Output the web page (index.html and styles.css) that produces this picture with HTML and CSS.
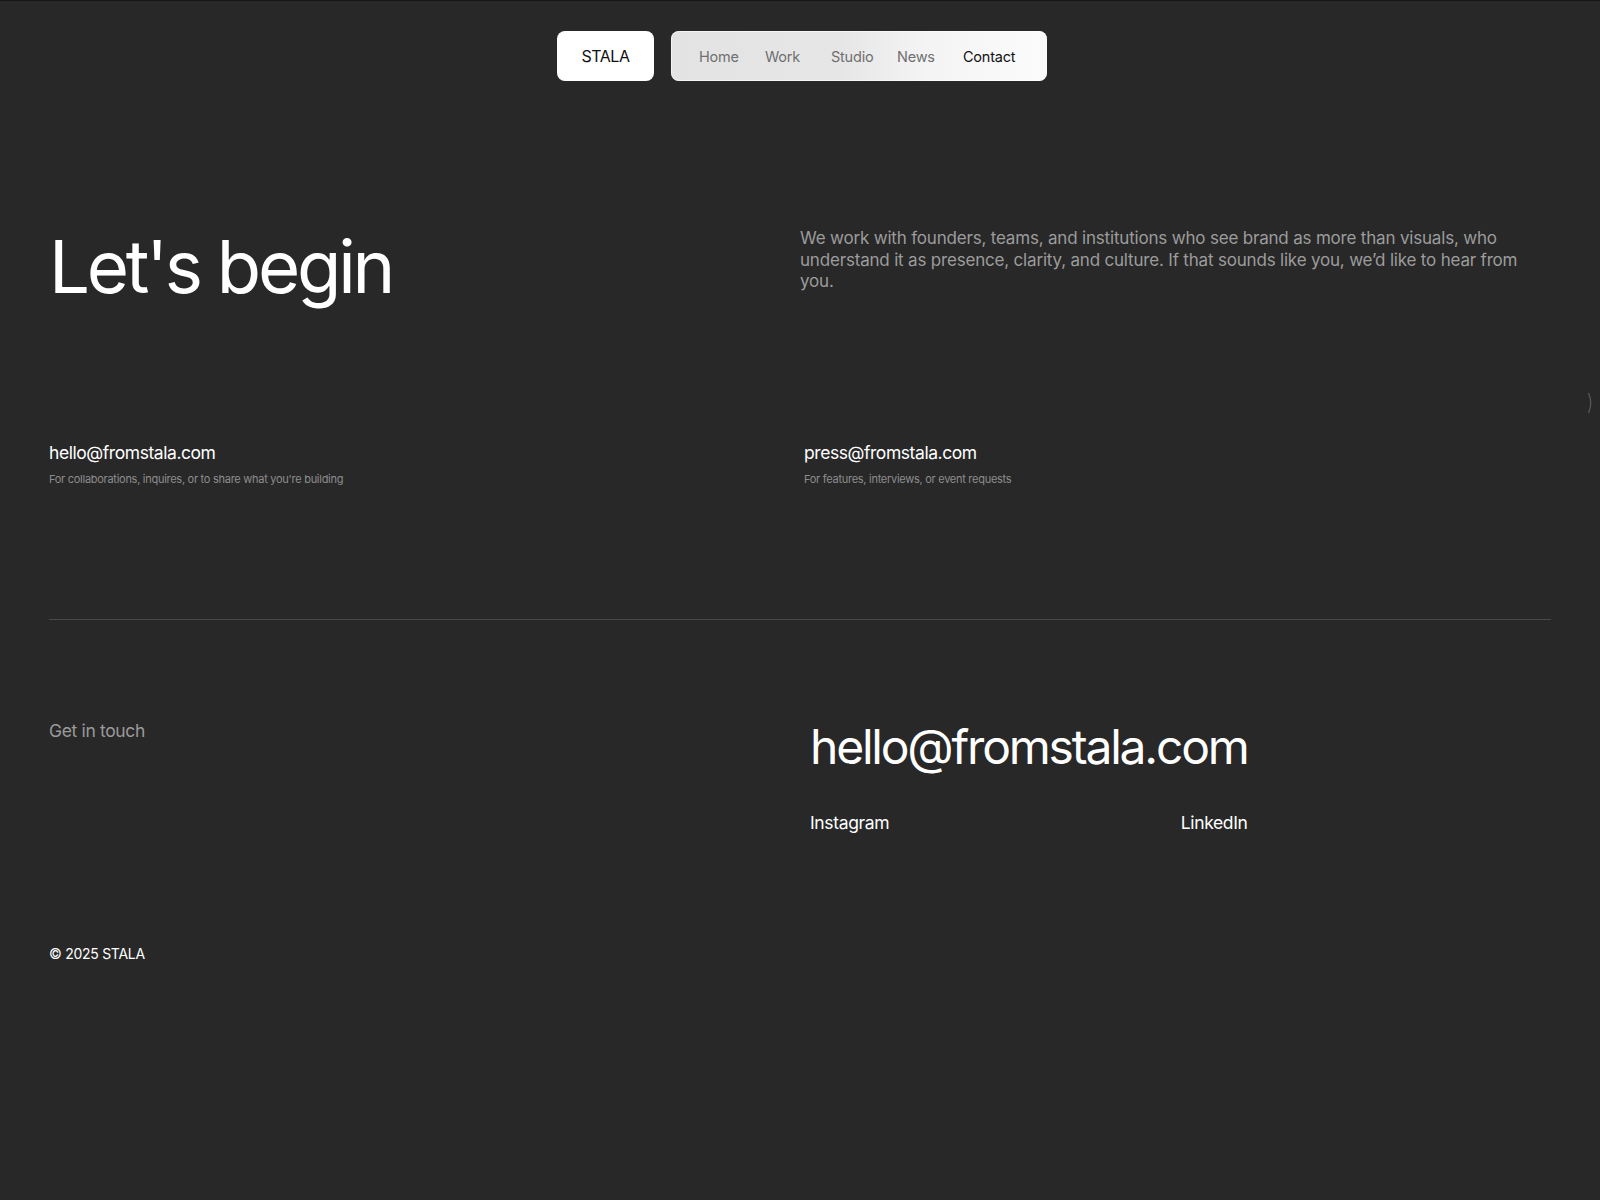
FILE: index.html
```html
<!DOCTYPE html>
<html lang="en">

<head>
    <meta charset="UTF-8">
    <meta name="viewport" content="width=device-width, initial-scale=1.0">
    <title>Contact — STALA</title>
    <link rel="stylesheet" href="styles.css">
</head>

<body>
    <header class="topbar">
        <a class="logo" href="#">STALA</a>
        <nav class="menu">
            <a href="#">Home</a>
            <a href="#">Work</a>
            <a href="#">Studio</a>
            <a href="#">News</a>
            <a href="#" class="active">Contact</a>
        </nav>
    </header>

    <main class="page">
        <section class="intro">
            <h1>Let's begin</h1>
            <p>We work with founders, teams, and institutions who see brand as more than visuals, who understand it as presence, clarity, and culture. If that sounds like you, we’d like to hear from you.</p>
        </section>

        <section class="contacts">
            <div class="contact">
                <a href="#">hello@fromstala.com</a>
                <span>For collaborations, inquires, or to share what you're building</span>
            </div>
            <div class="contact">
                <a href="#">press@fromstala.com</a>
                <span>For features, interviews, or event requests</span>
            </div>
        </section>
    </main>

    <footer class="footer">
        <div class="footer-row">
            <p class="footer-label">Get in touch</p>
            <div class="footer-main">
                <a class="big-mail" href="#">hello@fromstala.com</a>
                <div class="socials">
                    <a href="#">Instagram</a>
                    <a href="#">LinkedIn</a>
                </div>
            </div>
        </div>
        <p class="copyright">© 2025 STALA</p>
    </footer>

    <!-- custom cursor ring, mostly off the edge -->
    <svg class="cursor" width="8" height="24" viewBox="0 0 8 24">
        <path d="M1.5 2 Q6 12 1.5 22" fill="none" stroke="#575757" stroke-width="1.3"/>
    </svg>
</body>

</html>
```
FILE: styles.css
```css
* {
    box-sizing: border-box;
}

body {
    margin: 0;
    background: #282828;
    border-top: 1px solid #151515;
    font-family: Inter, "Noto Sans", sans-serif;
    color: #fff;
    min-height: 1200px;
}

a {
    color: inherit;
    text-decoration: none;
}

p, h1 {
    margin: 0;
}

/* top navigation */
.topbar {
    display: flex;
    justify-content: center;
    gap: 17px;
    padding: 30px 0 0 4px;
}

.logo {
    width: 97px;
    height: 50px;
    display: flex;
    align-items: center;
    justify-content: center;
    background: #fff;
    color: #111;
    border-radius: 8px;
    font-size: 16px;
    letter-spacing: -0.03em;
}

.menu {
    width: 376px;
    height: 50px;
    display: grid;
    grid-template-columns: 66px 66px 66px 66px auto;
    align-items: center;
    padding: 0 28px;
    border-radius: 8px;
    background: linear-gradient(90deg, #e3e3e3 0%, #e6e6e6 45%, #f4f4f4 68%, #fbfbfb 100%);
    box-shadow: inset 0 0 0 1px rgba(255, 255, 255, 0.6);
}

.menu a {
    font-size: 14.5px;
    color: #6f6f6f;
    letter-spacing: -0.015em;
}

.menu a.active {
    color: #111;
}

/* main content */
.page {
    padding: 0 49px;
}

.intro {
    display: grid;
    grid-template-columns: 1fr 1fr;
    padding-top: 146px;
}

.intro h1 {
    font-size: 72.5px;
    font-weight: 400;
    letter-spacing: -0.045em;
    line-height: 1;
    margin-top: 4px;
}

.intro p {
    font-size: 17px;
    line-height: 21.5px;
    color: #9c9c9c;
    letter-spacing: -0.011em;
    padding: 1px 10px 0 0;
}

.contacts {
    display: grid;
    grid-template-columns: 1fr 1fr;
    column-gap: 8px;
    padding-top: 138px;
}

.contact {
    display: flex;
    flex-direction: column;
    gap: 9px;
}

.contact a {
    font-size: 17.5px;
    letter-spacing: -0.025em;
}

.contact span {
    font-size: 11px;
    color: #8d8d8d;
    letter-spacing: -0.025em;
}

/* footer */
.footer {
    margin: 133px 49px 0;
    border-top: 1px solid #4a4a4a;
    padding-top: 95px;
}

.footer-row {
    display: grid;
    grid-template-columns: 1fr 1fr;
    column-gap: 20px;
}

.footer-label {
    font-size: 17.5px;
    color: #9a9a9a;
    letter-spacing: -0.02em;
    padding-top: 5px;
}

.footer-main {
    width: fit-content;
    padding-top: 3px;
}

.big-mail {
    display: block;
    font-size: 48px;
    letter-spacing: -0.046em;
    line-height: 1.2;
}

.socials {
    display: flex;
    justify-content: space-between;
    margin-top: 37px;
    font-size: 17.5px;
    letter-spacing: -0.02em;
}

.copyright {
    margin-top: 112px;
    font-size: 14px;
    letter-spacing: -0.02em;
}

.cursor {
    position: fixed;
    left: 1587px;
    top: 391px;
}
```
